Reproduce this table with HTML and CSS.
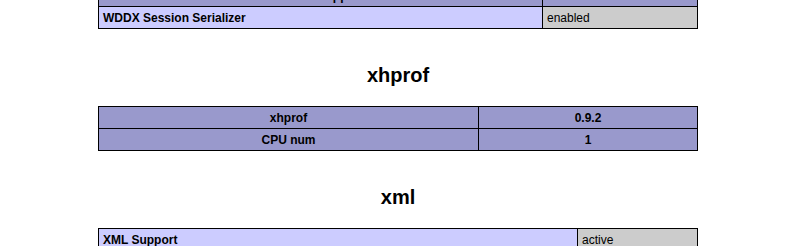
FILE: index.html
```html
<!DOCTYPE html>
<html>
<head>
<meta charset="utf-8">
<title>phpinfo()</title>
<link rel="stylesheet" href="styles.css">
</head>
<body>
<div class="page">
  <table class="t">
    <tr class="h"><th class="c-wddx">WDDX Support</th><th>enabled</th></tr>
    <tr><td class="e">WDDX Session Serializer</td><td class="v">enabled</td></tr>
  </table>
  <h2>xhprof</h2>
  <table class="t">
    <tr class="h"><th class="c-xhprof">xhprof</th><th>0.9.2</th></tr>
    <tr class="h"><th>CPU num</th><th>1</th></tr>
  </table>
  <h2>xml</h2>
  <table class="t">
    <tr><td class="e c-xml">XML Support</td><td class="v">active</td></tr>
    <tr><td class="e">XML Namespace Support</td><td class="v">active</td></tr>
  </table>
</div>
</body>
</html>
```

FILE: styles.css
```css
html, body {
  margin: 0;
  padding: 0;
  background: #ffffff;
  color: #000000;
  font-family: "Liberation Sans", Arial, sans-serif;
}

.page {
  width: 600px;
  margin: -16px 0 0 98px;
}

.t {
  width: 600px;
  border-collapse: collapse;
  table-layout: fixed;
}

.t th,
.t td {
  box-sizing: border-box;
  border: 1px solid #000000;
  padding: 4px 4px 2px;
  font-family: "Liberation Sans", Arial, sans-serif;
  font-size: 12px;
  line-height: 15px;
  vertical-align: baseline;
  white-space: nowrap;
}

.h th {
  background: #9999cc;
  font-weight: bold;
  text-align: center;
}

.e {
  background: #ccccff;
  font-weight: bold;
  text-align: left;
}

.v {
  background: #cccccc;
  font-weight: normal;
  text-align: left;
}

.c-wddx { width: 444px; }
.c-xhprof { width: 380px; }
.c-xml { width: 479px; }

h2 {
  margin: 35px 0 19px;
  font-family: "Liberation Sans", Arial, sans-serif;
  font-size: 20px;
  line-height: 23px;
  font-weight: bold;
  text-align: center;
}
```
